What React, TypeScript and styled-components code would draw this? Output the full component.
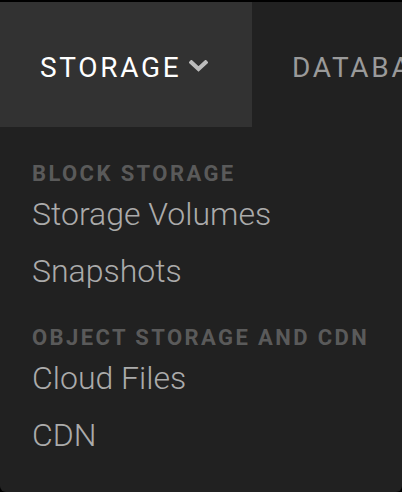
import React from "react";
import styled, { createGlobalStyle } from "styled-components";

const Global = createGlobalStyle`
  html, body { margin: 0; padding: 0; background: #000; }
  body { font-family: Roboto, "Liberation Sans", sans-serif; }
`;

const Panel = styled.div`
  margin-top: 2px;
  width: 402px;
  height: 490px;
  background: #212121;
  border-radius: 0 0 6px 6px;
  overflow: hidden;
  box-sizing: border-box;
`;

const NavBar = styled.nav`
  display: flex;
  height: 125px;
  white-space: nowrap;
`;

const Tab = styled.div<{ $active?: boolean }>`
  display: flex;
  align-items: center;
  gap: 8px;
  padding: 6px 40px 0 40px;
  flex-shrink: 0;
  background: ${(p) => (p.$active ? "#323232" : "transparent")};
  color: ${(p) => (p.$active ? "#ffffff" : "#9a9a9a")};
  font-size: 28px;
  font-weight: 400;
  letter-spacing: 2.7px;
  width: ${(p) => (p.$active ? "252px" : "auto")};
  box-sizing: border-box;
`;

const Chevron = styled.svg`
  width: 19px;
  height: 12px;
  display: block;
  margin-top: -3px;
`;

const Menu = styled.div`
  padding: 35px 32px 0 32px;
`;

const Section = styled.div`
  & + & {
    margin-top: 26px;
  }
`;

const SectionTitle = styled.div`
  font-size: 22px;
  line-height: 24px;
  font-weight: 700;
  letter-spacing: 2.4px;
  color: #5a5a5a;
  white-space: nowrap;
`;

const Item = styled.a`
  display: block;
  font-size: 32px;
  line-height: 57px;
  font-weight: 300;
  color: #ababab;
  text-decoration: none;
  white-space: nowrap;
`;

const sections = [
  { title: "BLOCK STORAGE", items: ["Storage Volumes", "Snapshots"] },
  { title: "OBJECT STORAGE AND CDN", items: ["Cloud Files", "CDN"] },
];

export default function App() {
  return (
    <>
      <Global />
      <Panel>
        <NavBar>
          <Tab $active>
            <span>STORAGE</span>
            <Chevron viewBox="0 0 19 12">
              <path
                d="M2.5 2.5 L9.5 9 L16.5 2.5"
                fill="none"
                stroke="#bdbdbd"
                strokeWidth="4.2"
                strokeLinecap="square"
              />
            </Chevron>
          </Tab>
          <Tab>
            <span>DATABASES</span>
          </Tab>
        </NavBar>
        <Menu>
          {sections.map((s) => (
            <Section key={s.title}>
              <SectionTitle>{s.title}</SectionTitle>
              {s.items.map((i) => (
                <Item key={i} href="#">
                  {i}
                </Item>
              ))}
            </Section>
          ))}
        </Menu>
      </Panel>
    </>
  );
}
